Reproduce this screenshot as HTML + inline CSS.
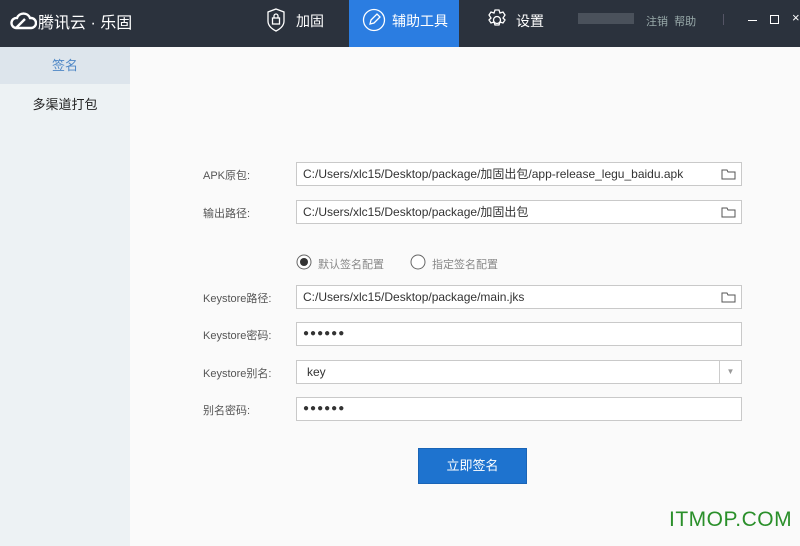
<!DOCTYPE html><html><head><meta charset="utf-8"><style>
*{margin:0;padding:0;box-sizing:border-box}
body{width:800px;height:546px;overflow:hidden;background:#fafafa;font-family:"Liberation Sans","Noto Sans CJK SC",sans-serif;position:relative}
.hd{position:absolute;left:0;top:0;width:800px;height:47px;background:#2b323d;color:#fff}
.a{position:absolute}
.side{position:absolute;left:0;top:47px;width:130px;height:499px;background:#edf2f4}
.lab{position:absolute;left:203px;font-size:11px;color:#555}
.in{position:absolute;left:296px;width:446px;height:24px;border:1px solid #c9c9c9;background:#fff;font-size:12px;color:#333;padding-left:6px;line-height:22px}
.fold{position:absolute;right:5px;top:5px}
</style></head><body>
<div class="hd">
<svg class="a" style="left:9px;top:9px" width="28" height="22" viewBox="0 0 28 22"><path d="M7 19h15a5 5 0 0 0 0-10h-1a7 7 0 0 0-13 0a5 5 0 0 0-1 10z M7 19l9-9" fill="none" stroke="#fff" stroke-width="2.4"/></svg>
<div class="a" style="left:38px;top:9px;font-size:16px">腾讯云 · 乐固</div>
<svg class="a" style="left:266px;top:8px" width="20" height="24" viewBox="0 0 20 24"><path d="M10 1l8 3v9c0 5-4 8-8 10c-4-2-8-5-8-10V4z" fill="none" stroke="#fff" stroke-width="1.3"/><rect x="6.5" y="10" width="7" height="6" fill="none" stroke="#fff" stroke-width="1.3"/><path d="M8 10V8a2 2 0 0 1 4 0v2" fill="none" stroke="#fff" stroke-width="1.3"/></svg>
<div class="a" style="left:296px;top:11px;font-size:14px">加固</div>
<div class="a" style="left:349px;top:0;width:110px;height:47px;background:#2b7de1"></div>
<svg class="a" style="left:362px;top:8px" width="24" height="24" viewBox="0 0 24 24"><circle cx="12" cy="12" r="10.5" fill="none" stroke="#fff" stroke-width="1.3"/><path d="M8 16l1-4 6-6 3 3-6 6z" fill="none" stroke="#fff" stroke-width="1.3"/></svg>
<div class="a" style="left:392px;top:11px;font-size:14px">辅助工具</div>
<svg class="a" style="left:485px;top:8px" width="24" height="24" viewBox="0 0 24 24"><circle cx="12" cy="12" r="3.5" fill="none" stroke="#fff" stroke-width="1.3"/><path d="M10 2h4l1 3 3-1 2 3-2 3 2 2-2 3-3-1-1 3h-4l-1-3-3 1-2-3 2-2-2-3 2-3 3 1z" fill="none" stroke="#fff" stroke-width="1.3"/></svg>
<div class="a" style="left:516px;top:11px;font-size:14px">设置</div>
<div class="a" style="left:578px;top:13px;width:56px;height:11px;background:#4a515b"></div>
<div class="a" style="left:646px;top:13px;font-size:11px;color:#9aa">注销&nbsp;&nbsp;帮助</div>
<div class="a" style="left:723px;top:14px;width:1px;height:11px;background:#556"></div>
<div class="a" style="left:748px;top:20px;width:9px;height:1px;background:#fff"></div>
<div class="a" style="left:770px;top:15px;width:9px;height:9px;border:1px solid #fff"></div>
<div class="a" style="left:792px;top:10px;font-size:13px">×</div>
</div>
<div class="side">
<div class="a" style="left:0;top:0;width:130px;height:37px;background:#dde5ec;color:#4f88c6;font-size:13px;text-align:center;line-height:37px">签名</div>
<div class="a" style="left:0;top:47px;width:130px;text-align:center;font-size:13px;color:#222">多渠道打包</div>
</div>
<div class="lab" style="top:167px">APK原包:</div>
<div class="in" style="top:162px">C:/Users/xlc15/Desktop/package/加固出包/app-release_legu_baidu.apk<svg class="fold" width="15" height="12"><path d="M1 2h5l1 2h7v7H1z" fill="none" stroke="#555"/></svg></div>
<div class="lab" style="top:205px">输出路径:</div>
<div class="in" style="top:200px">C:/Users/xlc15/Desktop/package/加固出包<svg class="fold" width="15" height="12"><path d="M1 2h5l1 2h7v7H1z" fill="none" stroke="#555"/></svg></div>
<svg class="a" style="left:296px;top:254px" width="16" height="16"><circle cx="8" cy="8" r="7" fill="#fff" stroke="#666"/><circle cx="8" cy="8" r="4" fill="#333"/></svg>
<div class="a" style="left:318px;top:256px;font-size:11px;color:#888">默认签名配置</div>
<svg class="a" style="left:410px;top:254px" width="16" height="16"><circle cx="8" cy="8" r="7" fill="#fff" stroke="#666"/></svg>
<div class="a" style="left:432px;top:256px;font-size:11px;color:#888">指定签名配置</div>
<div class="lab" style="top:290px">Keystore路径:</div>
<div class="in" style="top:285px">C:/Users/xlc15/Desktop/package/main.jks<svg class="fold" width="15" height="12"><path d="M1 2h5l1 2h7v7H1z" fill="none" stroke="#555"/></svg></div>
<div class="lab" style="top:327px">Keystore密码:</div>
<div class="in" style="top:322px;font-size:10px;letter-spacing:1px">●●●●●●</div>
<div class="lab" style="top:365px">Keystore别名:</div>
<div class="in" style="top:360px;padding-left:10px">key<div class="a" style="right:0;top:0;width:22px;height:22px;border-left:1px solid #ccc;color:#999;font-size:8px;text-align:center">▼</div></div>
<div class="lab" style="top:402px">别名密码:</div>
<div class="in" style="top:397px;font-size:10px;letter-spacing:1px">●●●●●●</div>
<div class="a" style="left:418px;top:448px;width:109px;height:36px;background:#1e73cf;border:1px solid #1a64b6;color:#fff;font-size:13px;text-align:center;line-height:34px">立即签名</div>
<div class="a" style="left:669px;top:508px;font-size:21px;color:#2a8f2a;letter-spacing:0.5px">ITMOP.COM</div>
</body></html>
